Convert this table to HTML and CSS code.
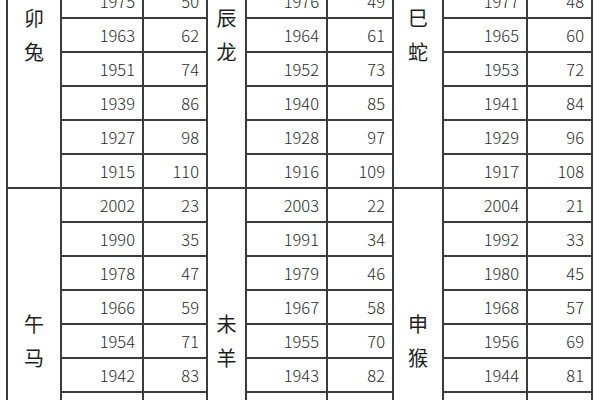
FILE: index.html
```html
<!DOCTYPE html>
<html lang="zh">
<head>
<meta charset="utf-8">
<title>生肖年份对照表</title>
<link rel="stylesheet" href="styles.css">
</head>
<body>
<div class="sheet">
<table class="zodiac">
  <colgroup>
    <col class="c-label1"><col class="c-year1"><col class="c-age1">
    <col class="c-label2"><col class="c-year2"><col class="c-age2">
    <col class="c-label3"><col class="c-year3"><col class="c-age3">
  </colgroup>
  <tbody>
    <tr><td class="label" rowspan="9">卯<br>兔</td><td class="num">2011</td><td class="num">14</td><td class="label" rowspan="9">辰<br>龙</td><td class="num">2012</td><td class="num">13</td><td class="label" rowspan="9">巳<br>蛇</td><td class="num">2013</td><td class="num">12</td></tr>
    <tr><td class="num">1999</td><td class="num">26</td><td class="num">2000</td><td class="num">25</td><td class="num">2001</td><td class="num">24</td></tr>
    <tr><td class="num">1987</td><td class="num">38</td><td class="num">1988</td><td class="num">37</td><td class="num">1989</td><td class="num">36</td></tr>
    <tr><td class="num">1975</td><td class="num">50</td><td class="num">1976</td><td class="num">49</td><td class="num">1977</td><td class="num">48</td></tr>
    <tr><td class="num">1963</td><td class="num">62</td><td class="num">1964</td><td class="num">61</td><td class="num">1965</td><td class="num">60</td></tr>
    <tr><td class="num">1951</td><td class="num">74</td><td class="num">1952</td><td class="num">73</td><td class="num">1953</td><td class="num">72</td></tr>
    <tr><td class="num">1939</td><td class="num">86</td><td class="num">1940</td><td class="num">85</td><td class="num">1941</td><td class="num">84</td></tr>
    <tr><td class="num">1927</td><td class="num">98</td><td class="num">1928</td><td class="num">97</td><td class="num">1929</td><td class="num">96</td></tr>
    <tr><td class="num">1915</td><td class="num">110</td><td class="num">1916</td><td class="num">109</td><td class="num">1917</td><td class="num">108</td></tr>

    <tr><td class="label" rowspan="9">午<br>马</td><td class="num">2002</td><td class="num">23</td><td class="label" rowspan="9">未<br>羊</td><td class="num">2003</td><td class="num">22</td><td class="label" rowspan="9">申<br>猴</td><td class="num">2004</td><td class="num">21</td></tr>
    <tr><td class="num">1990</td><td class="num">35</td><td class="num">1991</td><td class="num">34</td><td class="num">1992</td><td class="num">33</td></tr>
    <tr><td class="num">1978</td><td class="num">47</td><td class="num">1979</td><td class="num">46</td><td class="num">1980</td><td class="num">45</td></tr>
    <tr><td class="num">1966</td><td class="num">59</td><td class="num">1967</td><td class="num">58</td><td class="num">1968</td><td class="num">57</td></tr>
    <tr><td class="num">1954</td><td class="num">71</td><td class="num">1955</td><td class="num">70</td><td class="num">1956</td><td class="num">69</td></tr>
    <tr><td class="num">1942</td><td class="num">83</td><td class="num">1943</td><td class="num">82</td><td class="num">1944</td><td class="num">81</td></tr>
    <tr><td class="num">1930</td><td class="num">95</td><td class="num">1931</td><td class="num">94</td><td class="num">1932</td><td class="num">93</td></tr>
    <tr><td class="num">1918</td><td class="num">107</td><td class="num">1919</td><td class="num">106</td><td class="num">1920</td><td class="num">105</td></tr>
    <tr><td class="num">1906</td><td class="num">119</td><td class="num">1907</td><td class="num">118</td><td class="num">1908</td><td class="num">117</td></tr>
  </tbody>
</table>
</div>
</body>
</html>
```

FILE: styles.css
```css
html, body {
  margin: 0;
  padding: 0;
  background: #ffffff;
  overflow: hidden;
}

.sheet {
  width: 600px;
  height: 400px;
  overflow: hidden;
}

.zodiac {
  margin-top: -119px;
  margin-left: 6px;
  border-collapse: collapse;
  table-layout: fixed;
  width: 587px;
  font-family: "Noto Sans CJK SC", "Noto Sans", sans-serif;
  color: #2a2a2a;
}

.c-label1 { width: 54px; }
.c-year1  { width: 82px; }
.c-age1   { width: 64px; }
.c-label2 { width: 39px; }
.c-year2  { width: 81px; }
.c-age2   { width: 66px; }
.c-label3 { width: 50px; }
.c-year3  { width: 84px; }
.c-age3   { width: 65px; }

.zodiac tr {
  height: 34px;
}

.zodiac td {
  border: 2px solid #3c3c3c;
  padding: 0;
  white-space: nowrap;
}

.num {
  text-align: right;
  padding-right: 7px !important;
  font-size: 16.5px;
  font-weight: 300;
  line-height: 20px;
}

.label {
  text-align: center;
  vertical-align: middle;
  font-size: 20px;
  line-height: 34px;
  color: #1e1e1e;
}
```
